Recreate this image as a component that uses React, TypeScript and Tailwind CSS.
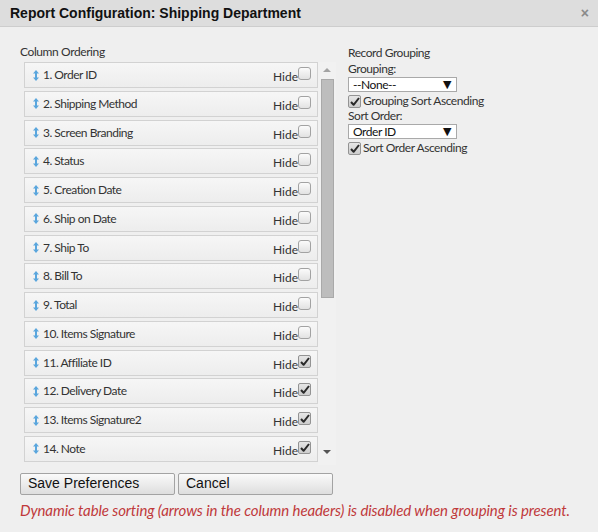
import React from "react";

const rows: { label: string; checked: boolean }[] = [
  { label: "1. Order ID", checked: false },
  { label: "2. Shipping Method", checked: false },
  { label: "3. Screen Branding", checked: false },
  { label: "4. Status", checked: false },
  { label: "5. Creation Date", checked: false },
  { label: "6. Ship on Date", checked: false },
  { label: "7. Ship To", checked: false },
  { label: "8. Bill To", checked: false },
  { label: "9. Total", checked: false },
  { label: "10. Items Signature", checked: false },
  { label: "11. Affiliate ID", checked: true },
  { label: "12. Delivery Date", checked: true },
  { label: "13. Items Signature2", checked: true },
  { label: "14. Note", checked: true },
];

function Check({ checked }: { checked: boolean }) {
  if (checked) {
    return (
      <span className="flex h-[13px] w-[13px] shrink-0 items-center justify-center rounded-[2px] border border-[#939393] bg-gradient-to-b from-[#e6e6e6] to-[#cdcdcd]">
        <svg width="10" height="9" viewBox="0 0 10 9">
          <path d="M1 5 L3.6 7.8 L9 1" fill="none" stroke="#2a2a2a" strokeWidth="2" strokeLinejoin="round" />
        </svg>
      </span>
    );
  }
  return (
    <span className="block h-[13px] w-[13px] shrink-0 rounded-[3px] border border-[#a2a2a2] bg-gradient-to-b from-[#fbfbfb] to-[#e2e2e2]" />
  );
}

function SortIcon() {
  return (
    <svg width="6" height="11" viewBox="0 0 6 11" className="shrink-0">
      <path d="M3 0 L6 3.5 L0 3.5 Z" fill="#5aa6dd" />
      <rect x="2" y="3" width="2" height="5" fill="#5aa6dd" />
      <path d="M3 11 L6 7.5 L0 7.5 Z" fill="#5aa6dd" />
    </svg>
  );
}

function Select({ value }: { value: string }) {
  return (
    <div className="flex h-[15px] w-[109px] items-center justify-between border border-[#a9a9a9] bg-white pl-[4px] pr-[5px] text-[12px] leading-[13px] text-[#111]">
      <span>{value}</span>
      <span
        className="text-[11px] leading-[11px] text-[#111]"
        style={{ fontFamily: "'DejaVu Sans', sans-serif" }}
      >
        ▼
      </span>
    </div>
  );
}

export default function App() {
  return (
    <div
      className="flex h-[532px] w-[598px] flex-col overflow-hidden bg-[#efefef] text-[#333]"
      style={{ fontFamily: "Lato, 'Liberation Sans', sans-serif" }}
    >
      <div className="flex h-[27px] shrink-0 items-center justify-between border-b border-[#cdcdcd] bg-[#dddddd] pl-[10px] pr-[9px]">
        <span
          className="text-[14px] font-bold leading-[16px] text-[#111]"
          style={{ fontFamily: "'Liberation Sans', Arial, sans-serif" }}
        >
          Report Configuration: Shipping Department
        </span>
        <span
          className="text-[14px] font-bold leading-[14px] text-[#8a8a8a]"
          style={{ fontFamily: "'Liberation Sans', Arial, sans-serif" }}
        >
          ×
        </span>
      </div>

      <div className="flex flex-col pl-[20px] pt-[18px]">
        <div className="flex">
          <div className="flex w-[318px] flex-col">
            <div className="h-[14px] text-[12px] leading-[14px] tracking-[-0.4px]">Column Ordering</div>
            <div className="mt-[3px] flex">
              <div className="flex w-[298px] flex-col pl-[4px]">
                {rows.map((r) => (
                  <div
                    key={r.label}
                    className="mb-[2.77px] flex h-[26px] items-center justify-between border border-[#d2d2d2] bg-gradient-to-b from-[#f6f6f6] to-[#ededed] pl-[8px] pr-[6px]"
                  >
                    <div className="flex items-center gap-[4px]">
                      <SortIcon />
                      <span className="text-[12px] leading-[14px] tracking-[-0.5px] text-[#333]">{r.label}</span>
                    </div>
                    <div className="flex h-[16px] items-start">
                      <span className="mt-[3px] text-[12px] leading-[14px] text-[#333]">Hide</span>
                      <Check checked={r.checked} />
                    </div>
                  </div>
                ))}
              </div>
              <div className="flex w-[18px] flex-col bg-[#f1f1f1] pb-[5px]">
                <div className="flex h-[16px] items-center justify-center">
                  <div className="h-0 w-0 border-x-[4px] border-b-[4px] border-x-transparent border-b-[#a3a3a3]" />
                </div>
                <div className="ml-[3px] mt-[1px] h-[219px] w-[13px] border border-[#a9a9a9] bg-[#bdbdbd]" />
                <div className="flex-1" />
                <div className="flex h-[16px] items-center justify-center">
                  <div className="h-0 w-0 border-x-[4px] border-t-[4px] border-x-transparent border-t-[#555]" />
                </div>
              </div>
            </div>
          </div>

          <div className="ml-[10px] flex flex-col text-[12px] leading-[16px] tracking-[-0.45px] text-[#333]">
            <div className="h-[16px]">Record Grouping</div>
            <div className="h-[16px]">Grouping:</div>
            <Select value="--None--" />
            <div className="mt-[2px] flex h-[14px] items-center gap-[2px]">
              <Check checked />
              <span>Grouping Sort Ascending</span>
            </div>
            <div className="h-[16px]">Sort Order:</div>
            <Select value="Order ID" />
            <div className="mt-[2px] flex h-[14px] items-center gap-[2px]">
              <Check checked />
              <span>Sort Order Ascending</span>
            </div>
          </div>
        </div>

        <div
          className="mt-[8px] flex gap-[3px]"
          style={{ fontFamily: "'Liberation Sans', Arial, sans-serif" }}
        >
          <div className="flex h-[22px] w-[155px] items-center rounded-[2px] border border-[#a3a3a3] bg-gradient-to-b from-[#fafafa] to-[#dedede] pl-[7px] text-[14px] text-[#111]">
            Save Preferences
          </div>
          <div className="flex h-[22px] w-[155px] items-center rounded-[2px] border border-[#a3a3a3] bg-gradient-to-b from-[#fafafa] to-[#dedede] pl-[7px] text-[14px] text-[#111]">
            Cancel
          </div>
        </div>

        <div className="mt-[7px] text-[15px] italic leading-[16px] tracking-[-0.1px] text-[#c0393b]">
          Dynamic table sorting (arrows in the column headers) is disabled when grouping is present.
        </div>
      </div>
    </div>
  );
}
